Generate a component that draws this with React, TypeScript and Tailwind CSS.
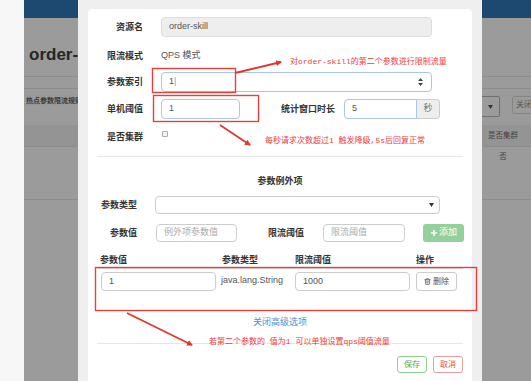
import { Plus, Trash2 } from 'lucide-react'

const label = 'text-[9px] font-bold text-[#333] text-right leading-[12px] whitespace-nowrap shrink-0'
const input =
  'h-full border border-[#cccccc] rounded-[4px] px-[7px] flex items-center text-[9px] text-[#555] bg-white shrink-0 whitespace-nowrap'

function Annotations() {
  return (
    <svg className="absolute inset-0 pointer-events-none" width={531} height={381}>
      <defs>
        <marker id="head" markerWidth="6" markerHeight="6" refX="5" refY="3" orient="auto" markerUnits="userSpaceOnUse">
          <path d="M0,0 L6,3 L0,6 z" fill="#e53530" />
        </marker>
      </defs>
      {/* 红框 */}
      <rect x={152.5} y={68.5} width={83} height={24} fill="none" stroke="#e5403c" strokeWidth={1.4} />
      <rect x={153.5} y={95.5} width={105} height={26} fill="none" stroke="#e5403c" strokeWidth={1.4} />
      <rect x={95.5} y={267.5} width={381} height={43} fill="none" stroke="#e5403c" strokeWidth={1.4} />
      {/* 箭头 */}
      <line x1={235} y1={73} x2={281} y2={62} stroke="#e53530" strokeWidth={1.8} markerEnd="url(#head)" />
      <line x1={220} y1={125} x2={250} y2={145} stroke="#e53530" strokeWidth={1.8} markerEnd="url(#head)" />
      <line x1={127} y1={313} x2={192} y2={345} stroke="#e53530" strokeWidth={1.8} markerEnd="url(#head)" />
    </svg>
  )
}

function Spinner() {
  return (
    <svg width="5" height="8" viewBox="0 0 5 8" className="shrink-0">
      <path d="M2.5 0 L5 3 L0 3 z M2.5 8 L5 5 L0 5 z" fill="#444" />
    </svg>
  )
}

function Caret() {
  return (
    <svg width="5" height="4" viewBox="0 0 5 4" className="shrink-0">
      <path d="M0 0 L5 0 L2.5 4 z" fill="#333" />
    </svg>
  )
}

function Modal() {
  return (
    <div className="absolute left-[78px] top-0 w-[404px] h-[381px] bg-[#efefef] pl-[10px] pt-[9px]">
      <div className="w-[384px] h-full bg-white rounded-t-[4px] px-[9px] pt-[8px] flex flex-col">
        {/* 基础项 */}
        <div className="flex items-center h-[20px]">
          <div className={`w-[46px] ${label}`}>资源名</div>
          <div className="ml-[18px] w-[271px] h-full bg-[#eeeeee] border border-[#dddddd] rounded-[4px] px-[7px] flex items-center text-[9px] text-[#555]">
            order-skill
          </div>
        </div>
        <div className="flex items-center h-[20px] mt-[9px]">
          <div className={`w-[46px] ${label}`}>限流模式</div>
          <div className="ml-[18px] text-[9px] text-[#555]">QPS 模式</div>
        </div>
        <div className="flex items-center h-[20px] mt-[6px]">
          <div className={`w-[46px] ${label}`}>参数索引</div>
          <div className={`ml-[18px] w-[271px] ${input} !border-[#a8c8e8] justify-between pr-[8px]`}>
            <span>1<span className="text-[#999]">|</span></span>
            <Spinner />
          </div>
        </div>
        <div className="flex items-center h-[20px] mt-[7px]">
          <div className={`w-[46px] ${label}`}>单机阈值</div>
          <div className={`ml-[18px] w-[79px] ${input} !border-[#a8c8e8]`}>1</div>
          <div className={`ml-[41px] ${label}`}>统计窗口时长</div>
          <div className="ml-[9px] flex h-full">
            <div className={`w-[73px] ${input} !border-[#a8c8e8] rounded-r-none`}>5</div>
            <div className="w-[23px] h-full bg-[#eeeeee] border border-l-0 border-[#cccccc] rounded-r-[4px] flex items-center justify-center text-[9px] text-[#777]">
              秒
            </div>
          </div>
        </div>
        <div className="flex items-start h-[20px] mt-[8px]">
          <div className={`w-[46px] ${label} leading-[20px]`}>是否集群</div>
          <div className="ml-[19px] mt-[4px] w-[6px] h-[6px] border border-[#aaa] rounded-[1px] bg-[#f4f4f4]" />
        </div>

        <div className="mt-[9px] border-t border-[#e6e6e6]" />

        {/* 参数例外项 */}
        <div className="mt-[18px] text-center text-[9px] font-bold text-[#333] leading-[12px]">参数例外项</div>
        <div className="flex items-center h-[18px] mt-[9px]">
          <div className={`w-[40px] ${label}`}>参数类型</div>
          <div className={`ml-[18px] w-[285px] ${input} justify-end pr-[5px]`}>
            <Caret />
          </div>
        </div>
        <div className="flex items-center h-[18px] mt-[10px]">
          <div className={`w-[40px] ${label}`}>参数值</div>
          <div className={`ml-[19px] w-[81px] ${input} text-[#aaa]`}>例外项参数值</div>
          <div className={`ml-[31px] ${label}`}>限流阈值</div>
          <div className={`ml-[19px] w-[82px] ${input} text-[#aaa]`}>限流阈值</div>
          <div className="ml-[18px] w-[41px] h-full shrink-0 bg-[#92d19c] rounded-[3px] flex items-center justify-center gap-[1px] text-[9px] text-white">
            <Plus size={8} strokeWidth={5} />
            添加
          </div>
        </div>

        {/* 表格 */}
        <div className="mt-[8px] grid grid-cols-[122px_73px_121px_50px] h-[19px] items-end pb-[2px] border-b border-[#dddddd] text-[9px] font-bold text-[#333] leading-[12px]">
          <div className="pl-[3px]">参数值</div>
          <div className="pl-[3px]">参数类型</div>
          <div className="pl-[3px]">限流阈值</div>
          <div className="pl-[3px]">操作</div>
        </div>
        <div className="grid grid-cols-[122px_73px_121px_50px] h-[32px] pt-[3px] items-start">
          <div className="pl-[4px] h-[19px]">
            <div className={`w-[115px] ${input}`}>1</div>
          </div>
          <div className="pl-[2px] pt-[2px] text-[9px] text-[#555] leading-[12px]">java.lang.String</div>
          <div className="pl-[3px] h-[19px]">
            <div className={`w-[115px] ${input}`}>1000</div>
          </div>
          <div className="pl-[3px] h-[19px]">
            <div className="w-[41px] h-full border border-[#cccccc] rounded-[3px] flex items-center justify-center gap-[2px] text-[8px] text-[#555]">
              <Trash2 size={7} strokeWidth={2.5} />
              删除
            </div>
          </div>
        </div>

        <div className="mt-[15px] text-center text-[9px] text-[#4a8fd2] leading-[12px]">关闭高级选项</div>
        <div className="mt-[15px] border-t border-[#e6e6e6]" />
        <div className="mt-[12px] flex justify-end gap-[6px]">
          <div className="w-[30px] h-[17px] border border-[#8fcf8f] rounded-[3px] flex items-center justify-center text-[8px] text-[#4cae4c]">
            保存
          </div>
          <div className="w-[30px] h-[17px] border border-[#e8a09e] rounded-[3px] flex items-center justify-center text-[8px] text-[#d9534f]">
            取消
          </div>
        </div>
      </div>
    </div>
  )
}

export default function App() {
  return (
    <div className="relative w-[531px] h-[381px] overflow-hidden bg-[#9b9b9b] flex font-['Liberation_Sans','Noto_Sans_CJK_SC',sans-serif]">
      {/* 背景页面（遮罩下） */}
      <div className="w-[24px] h-full bg-[#f7f7f7] shrink-0" />
      <div className="w-[518px] shrink-0 flex flex-col">
        <div className="h-[18px] bg-[#1d4870]" />
        <div className="h-[59px] border-b border-[#8d8d8d] flex items-center pl-[5px] pt-[16px]">
          <span className="text-[17px] font-bold text-[#262626]">order-</span>
        </div>
        <div className="h-[12px] border-b border-[#8d8d8d]" />
        <div className="h-[36px] flex justify-between pl-[2px]">
          <span className="text-[7px] font-bold text-[#3a3a3a] mt-[7px]">热点参数限流规则</span>
          <div className="flex items-start gap-[12px] mt-[7px]">
            <div className="w-[40px] h-[21px] border border-[#6e6e6e] rounded-[2px] flex items-center justify-end pr-[6px]">
              <Caret />
            </div>
            <div className="w-[30px] h-[18px] border border-[#858585] rounded-[3px] flex items-center pl-[3px] text-[8px] text-[#555]">
              关闭
            </div>
          </div>
        </div>
        <div className="h-[22px] bg-[#949494] border-b border-[#8d8d8d] flex justify-end pr-[19px] items-center">
          <div className="w-[40px] text-center text-[7.5px] text-[#444]">是否集群</div>
        </div>
        <div className="h-[53px] border-b border-[#8d8d8d] flex justify-end pr-[19px] pt-[4px]">
          <div className="w-[40px] text-center text-[7.5px] text-[#444]">否</div>
        </div>
      </div>

      <Modal />
      <Annotations />

      {/* 注释文字 */}
      <div className="absolute left-[290px] top-[56px] text-[8px] leading-[12px] text-[#f03b3b] whitespace-nowrap font-['Liberation_Mono','Noto_Sans_CJK_SC',monospace]">
        对order-skill的第二个参数进行限制流量
      </div>
      <div className="absolute left-[265px] top-[135px] text-[8px] leading-[12px] text-[#f03b3b] whitespace-nowrap font-['Liberation_Mono','Noto_Sans_CJK_SC',monospace]">
        每秒请求次数超过1 触发降级,5s后回复正常
      </div>
      <div className="absolute left-[209px] top-[336px] text-[8px] leading-[12px] text-[#f03b3b] whitespace-nowrap font-['Liberation_Mono','Noto_Sans_CJK_SC',monospace]">
        若第二个参数的 值为1 可以单独设置qps阈值流量
      </div>
    </div>
  )
}
